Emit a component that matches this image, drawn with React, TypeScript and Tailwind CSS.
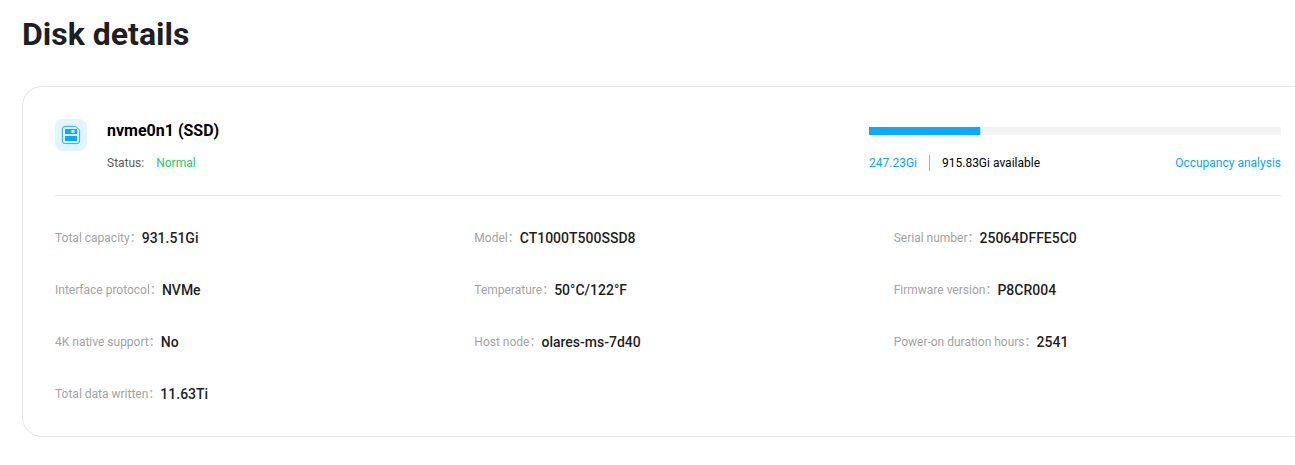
const items = [
  ['Total capacity', '931.51Gi'],
  ['Model', 'CT1000T500SSD8'],
  ['Serial number', '25064DFFE5C0'],
  ['Interface protocol', 'NVMe'],
  ['Temperature', '50°C/122°F'],
  ['Firmware version', 'P8CR004'],
  ['4K native support', 'No'],
  ['Host node', 'olares-ms-7d40'],
  ['Power-on duration hours', '2541'],
  ['Total data written', '11.63Ti'],
];

function DiskIcon() {
  return (
    <div className="flex size-8 shrink-0 items-center justify-center rounded-lg bg-[#e2f4ff]">
      <svg width="20" height="20" viewBox="0 0 20 20" fill="none">
        <path
          d="M4 1.4h10.8l3.8 3.8v10.8a2.6 2.6 0 0 1-2.6 2.6H4A2.6 2.6 0 0 1 1.4 16V4A2.6 2.6 0 0 1 4 1.4Z"
          stroke="#08acff"
          strokeWidth="0.9"
        />
        <path d="M4 4h12v5H4Z" fill="#08acff" />
        <path d="M4 11h12v5H4Z" fill="#08acff" />
        <path d="M10.5 5h3.5v3h-3.5Z" fill="#e2f4ff" />
        <path d="M12.5 5H14v3h-1.5Z" fill="#84d3ff" />
      </svg>
    </div>
  );
}

export default function App() {
  return (
    <div className="h-[465px] w-[1295px] overflow-hidden bg-white font-['Roboto',sans-serif] text-[#1f1f1f]">
      <h1 className="ml-[22px] pt-3.5 text-[32px] leading-10 font-bold">Disk details</h1>
      <section className="mt-8 ml-[22px] h-[351px] w-[1292px] rounded-[20px] border border-[#e5e5e5] px-8 pt-8">
        <div className="flex h-[77px] w-[1226px] justify-between border-b border-[#e5e5e5]">
          <div className="flex gap-5">
            <DiskIcon />
            <div>
              <h2 className="text-base leading-6 font-bold text-black">nvme0n1 (SSD)</h2>
              <p className="mt-3 flex gap-3 text-xs leading-4 text-[#5c5c5c]">
                <span>Status:</span>
                <span className="text-[#1dc96c]">Normal</span>
              </p>
            </div>
          </div>
          <div className="w-[412px] pt-2">
            <div className="h-2 bg-[#f4f4f4]">
              <div className="h-2 w-[112px] border-r border-[#b5e2fb] bg-[#08acff]" />
            </div>
            <div className="mt-5 flex items-center text-xs leading-4">
              <span className="text-[#08a6f5]">247.23Gi</span>
              <span className="mx-3 h-4 w-px bg-[#adadad]" />
              <span className="text-black">915.83Gi available</span>
              <span className="ml-auto text-[#08a6f5]">Occupancy analysis</span>
            </div>
          </div>
        </div>
        <dl className="mt-8 grid w-[1258px] grid-cols-3 gap-y-8">
          {items.map(([label, value]) => (
            <div key={label} className="flex h-5 items-center">
              <dt className="flex text-xs text-[#a3a3a3]">
                {label}
                <span lang="zh-CN" className="-mt-px font-['Noto_Sans_CJK_SC',sans-serif] leading-4">：</span>
              </dt>
              <dd className="text-sm leading-5 font-medium">{value}</dd>
            </div>
          ))}
        </dl>
      </section>
    </div>
  );
}
